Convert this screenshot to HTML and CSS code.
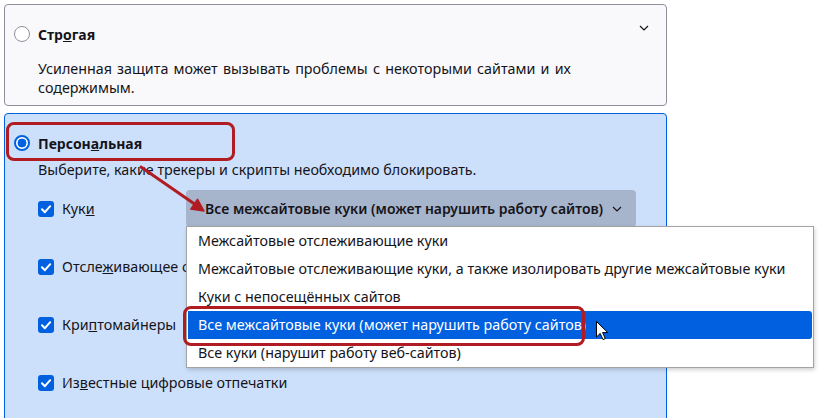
FILE: index.html
```html
<!DOCTYPE html>
<html lang="ru">
<head>
<meta charset="utf-8">
<title>Настройки</title>
<link rel="stylesheet" href="styles.css">
</head>
<body>
<div class="page">
  <section class="card strict">
    <div class="head">
      <span class="radio"></span>
      <span class="title">Стр<u>о</u>гая</span>
      <svg class="chev" width="10" height="6" viewBox="0 0 10 6"><path d="M1 1 L5 5 L9 1" fill="none" stroke="#15141a" stroke-width="1.2"/></svg>
    </div>
    <p class="desc">Усиленная защита может вызывать проблемы с некоторыми сайтами и их<br>содержимым.</p>
  </section>

  <section class="card custom">
    <div class="head">
      <span class="radio on"></span>
      <span class="title">Персон<u>а</u>льная</span>
    </div>
    <p class="desc">Выберите, какие трекеры и скрипты необходимо блокировать.</p>
    <div class="opts">
      <div class="opt">
        <label class="check"><span class="box"><svg width="16" height="16" viewBox="0 0 16 16"><path d="M4 8.3 L6.9 11.2 L12.2 5.2" fill="none" stroke="#fff" stroke-width="2" stroke-linecap="round" stroke-linejoin="round"/></svg></span><span class="lbl">Кук<u>и</u></span></label>
        <div class="select-wrap">
          <div class="select"><span>Все межсайтовые куки (может нарушить работу сайтов)</span><svg width="10" height="6" viewBox="0 0 10 6"><path d="M1 1 L5 5 L9 1" fill="none" stroke="#15141a" stroke-width="1.2"/></svg></div>
          <ul class="popup">
            <li>Межсайтовые отслеживающие куки</li>
            <li>Межсайтовые отслеживающие куки, а также изолировать другие межсайтовые куки</li>
            <li>Куки с непосещённых сайтов</li>
            <li class="sel">Все межсайтовые куки (может нарушить работу сайтов)</li>
            <li>Все куки (нарушит работу веб-сайтов)</li>
          </ul>
        </div>
      </div>
      <div class="opt">
        <label class="check"><span class="box"><svg width="16" height="16" viewBox="0 0 16 16"><path d="M4 8.3 L6.9 11.2 L12.2 5.2" fill="none" stroke="#fff" stroke-width="2" stroke-linecap="round" stroke-linejoin="round"/></svg></span><span class="lbl clip">Отсле<u>ж</u>ивающее содержимое</span></label>
      </div>
      <div class="opt">
        <label class="check"><span class="box"><svg width="16" height="16" viewBox="0 0 16 16"><path d="M4 8.3 L6.9 11.2 L12.2 5.2" fill="none" stroke="#fff" stroke-width="2" stroke-linecap="round" stroke-linejoin="round"/></svg></span><span class="lbl">Кри<u>п</u>томайнеры</span></label>
      </div>
      <div class="opt">
        <label class="check"><span class="box"><svg width="16" height="16" viewBox="0 0 16 16"><path d="M4 8.3 L6.9 11.2 L12.2 5.2" fill="none" stroke="#fff" stroke-width="2" stroke-linecap="round" stroke-linejoin="round"/></svg></span><span class="lbl">Из<u>в</u>естные цифровые отпечатки</span></label>
      </div>
    </div>
  </section>

  <div class="mark mark-title"></div>
  <div class="mark mark-item"></div>
  <svg class="overlay" width="821" height="418" viewBox="0 0 821 418">
    <path d="M141 167 L196 205" stroke="#b01c22" stroke-width="3" stroke-linecap="round"/>
    <path d="M204 211 L197.6 199.3 L190.8 209.1 Z" fill="#b01c22" stroke="#b01c22" stroke-width="1.5" stroke-linejoin="round"/>
    <path d="M596.5 321.5 L596.5 337 L600.2 333.4 L603 339.6 L605.3 338.6 L602.6 332.6 L607.8 332.6 Z" fill="#fff" stroke="#000" stroke-width="1" stroke-linejoin="round"/>
  </svg>
</div>
</body>
</html>
```

FILE: styles.css
```css
html, body {
  margin: 0;
  padding: 0;
  overflow: hidden;
  background: #fff;
}

body {
  font-family: "Noto Sans", sans-serif;
  font-size: 14.3px;
  color: #15141a;
}

.page {
  position: relative;
  width: 663px;
  padding: 4px 0 0 4px;
}

.card {
  border: 1px solid #8f8f9d;
  border-radius: 4px;
  background: #f9f9fb;
  padding: 19px 9px 8px;
}

.custom {
  margin-top: 7px;
  background: #cde0fb;
  border-color: #0061e0;
  padding-bottom: 60px;
}

.head {
  display: flex;
  align-items: center;
  gap: 8px;
  height: 20px;
}

.radio {
  width: 16px;
  height: 16px;
  box-sizing: border-box;
  border: 1px solid #8f8f9d;
  border-radius: 50%;
  background: #fff;
  flex: none;
}

.radio.on {
  border: 2px solid #0061e0;
  background: radial-gradient(circle, #0061e0 0 4.2px, #fff 4.7px);
}

.title {
  font-weight: 700;
  font-size: 14px;
}

.chev {
  margin-left: auto;
  margin-right: 8px;
  align-self: flex-start;
  margin-top: 1px;
}

.desc {
  margin: 15px 0 0 24px;
  line-height: 19px;
}

.strict .desc {
  word-spacing: 1.5px;
}

.custom .desc {
  margin-top: 7px;
}

.opts {
  display: flex;
  flex-direction: column;
  gap: 21px;
  margin: 11px 0 0 24px;
}

.opt {
  display: flex;
  align-items: center;
  height: 37px;
}

.check {
  display: flex;
  align-items: center;
  gap: 8px;
  width: 148px;
  flex: none;
  white-space: nowrap;
}

.lbl.clip {
  max-width: 124px;
  overflow: hidden;
}

.box {
  width: 16px;
  height: 16px;
  border-radius: 3px;
  background: #0061e0;
  display: flex;
  flex: none;
}

.select-wrap {
  position: relative;
}

.select {
  display: flex;
  align-items: center;
  gap: 9px;
  width: 450px;
  height: 37px;
  box-sizing: border-box;
  padding: 0 0 0 19px;
  background: #a7b5cc;
  border-radius: 4px;
  font-weight: 600;
  font-size: 14px;
  white-space: nowrap;
}

.popup {
  position: absolute;
  left: 0;
  top: 36px;
  width: 628px;
  box-sizing: border-box;
  margin: 0;
  padding: 0 1px;
  list-style: none;
  background: #fff;
  border: 1px solid #a3a3a3;
  box-shadow: 1px 2px 4px rgba(0, 0, 0, 0.18);
  z-index: 2;
}

.popup li {
  height: 28px;
  line-height: 28px;
  padding-left: 10px;
  white-space: nowrap;
}

.popup li.sel {
  background: #0060df;
  color: #fff;
  border-radius: 0 3px 3px 0;
}

.mark {
  position: absolute;
  border: 3px solid #b01c22;
  border-radius: 8px;
  box-sizing: border-box;
  z-index: 3;
}

.mark-title {
  left: 6px;
  top: 122px;
  width: 229px;
  height: 39px;
}

.mark-item {
  left: 183px;
  top: 306px;
  width: 402px;
  height: 40px;
}

.overlay {
  position: absolute;
  left: 0;
  top: 0;
  z-index: 4;
  pointer-events: none;
}
```
